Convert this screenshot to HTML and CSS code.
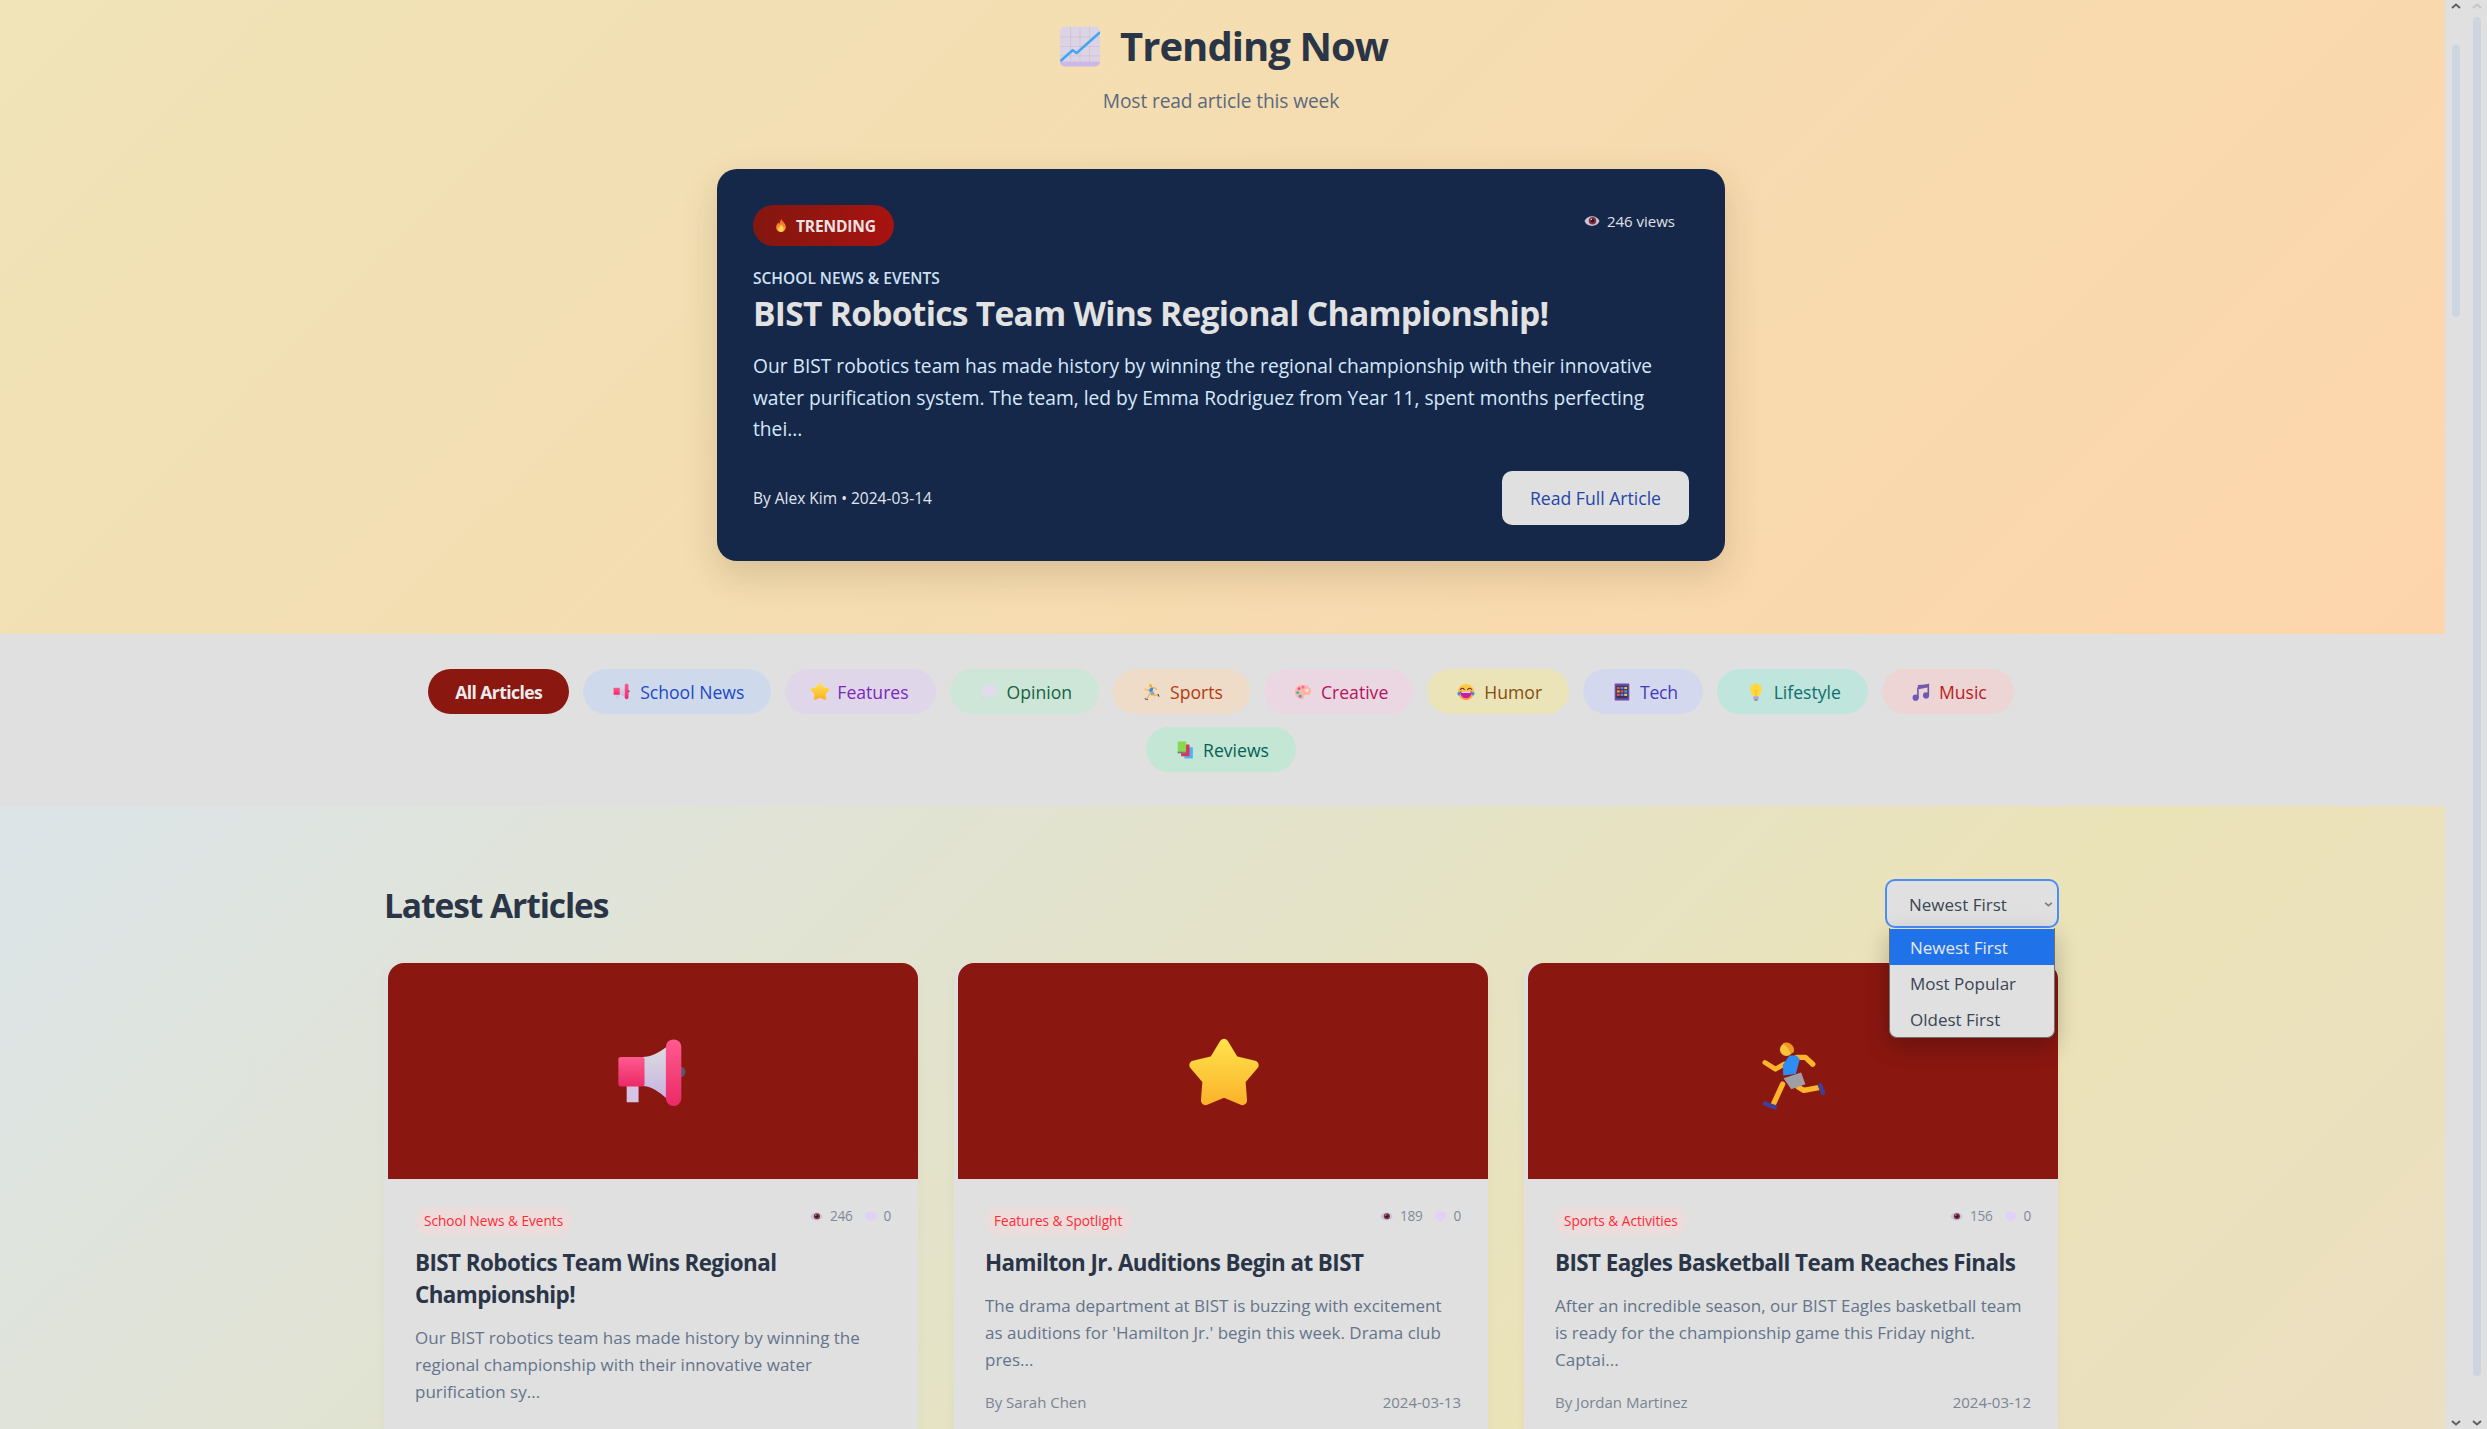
FILE: index.html
```html
<!DOCTYPE html>
<html lang="en">
<head>
<meta charset="utf-8">
<title>Trending Now</title>
<link rel="stylesheet" href="styles.css">
</head>
<body>
<svg class="defs" aria-hidden="true">
  <defs>
    <linearGradient id="gStar" x1="0" y1="0" x2="0" y2="1"><stop offset="0" stop-color="#ffe04a"/><stop offset="1" stop-color="#fbb52c"/></linearGradient>
    <linearGradient id="gPink" x1="0" y1="0" x2="0" y2="1"><stop offset="0" stop-color="#ff5a8f"/><stop offset="1" stop-color="#ec2a68"/></linearGradient>
    <linearGradient id="gCone" x1="0" y1="0" x2="0" y2="1"><stop offset="0" stop-color="#dcdce0"/><stop offset="1" stop-color="#c6b2e2"/></linearGradient>
    <linearGradient id="gFire" x1="0" y1="0" x2="0" y2="1"><stop offset="0" stop-color="#f4622a"/><stop offset="1" stop-color="#ffa63a"/></linearGradient>
    <linearGradient id="gFace" x1="0" y1="0" x2="0" y2="1"><stop offset="0" stop-color="#ffd24a"/><stop offset="1" stop-color="#fb9a3c"/></linearGradient>
    <symbol id="i-chart" viewBox="0 0 32 32">
      <rect x="0" y="0" width="32" height="32" rx="4" fill="#dcd3e4"/>
      <path d="M0 8.500H32M0 16H32M0 23.500H32M8.500 0V32M16 0V32M23.500 0V32" stroke="#cbc1d4" stroke-width=".6" fill="none"/>
      <path d="M0 28H32V28a4 4 0 0 1-4 4H4a4 4 0 0 1-4-4Z" fill="#cdb9e6"/>
      <path d="M.4 27.600 10 19l3.400 2.200L32 4.600" stroke="#3ea6f2" stroke-width="2" fill="none"/>
    </symbol>
    <symbol id="i-mega" viewBox="0 0 32 32">
      <rect x="4.500" y="19" width="5" height="8.500" rx=".5" fill="#d6c4e6"/>
      <path d="M11 8.400C15 8.400 18 6.600 21.500 4V26C18 23 15 20.600 11 20.600Z" fill="url(#gCone)"/>
      <circle cx="27" cy="14.700" r="2.300" fill="#55566e"/>
      <rect x="1" y="8.400" width="11" height="12.400" rx="1" fill="url(#gPink)"/>
      <rect x="21" y="1" width="6.500" height="28" rx="3.200" fill="url(#gPink)"/>
    </symbol>
    <symbol id="i-star" viewBox="1 2 30 30">
      <path d="M16 4.500 20.100 11.300 27.900 13.100 22.700 19.200 23.300 27.100 16 24 8.700 27.100 9.300 19.200 4.100 13.100 11.900 11.300Z" fill="url(#gStar)" stroke="url(#gStar)" stroke-width="3.600" stroke-linejoin="round"/>
    </symbol>
    <symbol id="i-run" viewBox="-1 -1 34 34">
      <g fill="none" stroke-linecap="round" stroke-linejoin="round">
        <path d="M11.600 11.100 7.700 13.400 3 10.400" stroke="#fdb52b" stroke-width="2.200"/>
        <path d="M10.900 20.100 6.900 28.800" stroke="#fdb52b" stroke-width="2.400"/>
        <path d="M18 21.500 20.400 22.900 27 21.600" stroke="#fdb52b" stroke-width="2.400"/>
        <path d="M3 28.800 7.400 30.400" stroke="#3f3f98" stroke-width="2"/>
        <path d="M27.600 20.600 29 24" stroke="#3f3f98" stroke-width="2"/>
        <path d="M17.200 8.100 21.100 8.100 24.400 11.200" stroke="#fdb52b" stroke-width="2.400"/>
      </g>
      <path d="M11.300 17.400 19.200 14.900 21.100 20.100 14.800 22.400Z" fill="#a29ea8"/>
      <path d="M14 7.300 17 7.300 18.600 9 16.800 15.600 11.200 16.200 11 11.400Z" fill="#2f8cf0"/>
      <circle cx="12.600" cy="4.600" r="2.900" fill="#fdc33c"/>
      <path d="M11 1.800a3.500 3.500 0 0 1 5 3.500c-.3 1.200-1.200 1.200-1.600.6-.5-.8-.8-2-3.400-4Z" fill="#ec9a1e"/>
    </symbol>
    <symbol id="i-fire" viewBox="0 0 32 32">
      <path d="M16.500 1C19 6 27 10.500 27 19.500C27 26 22 31 16 31C10 31 5 26.500 5 20C5 15 8 11.500 9.500 9C10.500 11 11.500 12 12.500 12C13.500 8 14.500 5 16.500 1Z" fill="url(#gFire)"/>
      <path d="M16 13C18 17 22 19.500 22 24C22 27.500 19.500 30 16 30C12.500 30 10 27.500 10 24.500C10 20.500 14.500 18 16 13Z" fill="#ffd84a"/>
    </symbol>
    <symbol id="i-eye" viewBox="0 0 32 32">
      <path d="M1 16C6 3 26 3 31 16C26 29 6 29 1 16Z" fill="#cdc2d8"/>
      <circle cx="17" cy="15.500" r="7.500" fill="#7a3540"/>
      <circle cx="17" cy="15.500" r="3.500" fill="#2e1622"/>
      <circle cx="14.500" cy="12.500" r="1.500" fill="#f0e4ea"/>
    </symbol>
    <symbol id="i-speech" viewBox="0 0 32 32">
      <path d="M16 4C8 4 2 8.500 2 14.500C2 20.500 8 24 15 24C13.500 26 11 27.500 9 28.500C14 28.500 20 26.500 23 23.500C27.500 22 30 18.500 30 14.500C30 8.500 24 4 16 4Z" fill="#dfd2f6"/>
    </symbol>
    <symbol id="i-thought" viewBox="0 0 32 32">
      <path d="M10 5C13 2 19 2 22 5C27 5 31 9 30 14C31 19 27 24 22 23.500C19 26 13 26 10.500 23.500C5 24 2 19 3 14C2 9 5 5 10 5Z" fill="#e2dbee"/>
      <circle cx="5" cy="27" r="2.400" fill="#dcd4ea"/>
      <circle cx="2" cy="31" r="1.200" fill="#dcd4ea"/>
    </symbol>
    <symbol id="i-palette" viewBox="0 0 32 32">
      <path d="M15 3C7 3 1.500 9 1.500 16C1.500 23 7 29 14 29C17 29 18.500 27 18 24.500C17.500 22 19 20.500 21.500 21C25.500 21.500 30.500 20.500 30.500 15C30.500 8 24 3 15 3Z" fill="#fdb6a0"/>
      <circle cx="9" cy="10" r="2.500" fill="#f0448c"/>
      <circle cx="16" cy="7.500" r="2.500" fill="#f466b8"/>
      <circle cx="6.500" cy="17" r="2.500" fill="#20b8d0"/>
      <circle cx="11" cy="23.500" r="2.500" fill="#3a9ae8"/>
      <circle cx="23" cy="13" r="3" fill="#e8e4ea"/>
    </symbol>
    <symbol id="i-laugh" viewBox="0 0 32 32">
      <circle cx="16" cy="16" r="14.500" fill="url(#gFace)"/>
      <path d="M6 11.500C8 8.500 11 8.500 13 11.500M19 11.500C21 8.500 24 8.500 26 11.500" stroke="#5a3a20" stroke-width="1.800" fill="none" stroke-linecap="round"/>
      <path d="M5.500 15H26.500C26.500 22 22 27 16 27C10 27 5.500 22 5.500 15Z" fill="#c81ea0"/>
      <path d="M8 15H24V17.500H8Z" fill="#f4f0f0"/>
      <path d="M1 17C3 15.500 6 15.500 7 17.500C7.500 20 5.500 22.500 3 22C1 21.500 .5 19 1 17ZM31 17C29 15.500 26 15.500 25 17.500C24.500 20 26.500 22.500 29 22C31 21.500 31.500 19 31 17Z" fill="#3f8fe8"/>
    </symbol>
    <symbol id="i-abacus" viewBox="0 0 32 32">
      <rect x="3" y="1" width="26" height="30" rx="1.500" fill="#6a4ea0"/>
      <rect x="6" y="5" width="20" height="22" fill="#3e2c60"/>
      <g fill="#f0a030">
        <rect x="7" y="7" width="5" height="4" fill="#f05040"/><rect x="13.500" y="7" width="5" height="4" fill="#3a9af0"/><rect x="20" y="7" width="5" height="4" fill="#f0c030"/>
        <rect x="7" y="13" width="5" height="4"/><rect x="13.500" y="13" width="5" height="4" fill="#f05040"/><rect x="20" y="13" width="5" height="4" fill="#3a9af0"/>
        <rect x="7" y="19" width="5" height="4" fill="#f05040"/><rect x="13.500" y="19" width="5" height="4" fill="#3a9af0"/><rect x="20" y="19" width="5" height="4" fill="#f0d040"/>
      </g>
    </symbol>
    <symbol id="i-bulb" viewBox="0 0 32 32">
      <path d="M16 1C9.500 1 5.500 6 5.500 11.500C5.500 16.500 10 18.500 11 23.500H21C22 18.500 26.500 16.500 26.500 11.500C26.500 6 22.500 1 16 1Z" fill="#ffd83e"/>
      <path d="M12.500 12 16 15 19.500 12M16 15V23" stroke="#f6a820" stroke-width="1.200" fill="none"/>
      <rect x="11" y="23.500" width="10" height="6" rx="1" fill="#b9a6c6"/>
      <rect x="13" y="29" width="6" height="2.500" rx="1" fill="#8a7a9a"/>
    </symbol>
    <symbol id="i-music" viewBox="0 0 32 32">
      <path d="M10.500 8.500 29 3V22" stroke="#7358ac" stroke-width="3" fill="none"/>
      <path d="M10.500 8V27" stroke="#7358ac" stroke-width="3" fill="none"/>
      <path d="M10 3.500 30 2V7.500L12 11Z" fill="#7358ac"/>
      <circle cx="6.500" cy="26" r="5.500" fill="#6c58b8"/>
      <circle cx="25" cy="22" r="5.500" fill="#6c58b8"/>
    </symbol>
    <symbol id="i-books" viewBox="0 0 32 32">
      <rect x="15" y="11" width="15" height="20" rx="1" fill="#4cb4f4"/>
      <rect x="9" y="6" width="15" height="21" rx="1" fill="#e0305c"/>
      <rect x="3" y="1" width="15" height="20" rx="1" fill="#88d850"/>
      <rect x="3" y="19" width="15" height="3" fill="#7a7a88"/>
    </symbol>
    <symbol id="i-chev-up" viewBox="0 0 10 6"><path d="M1 5 5 1.500 9 5" fill="none" stroke="currentColor" stroke-width="2"/></symbol>
    <symbol id="i-chev-down" viewBox="0 0 10 6"><path d="M1 1 5 4.500 9 1" fill="none" stroke="currentColor" stroke-width="2"/></symbol>
  </defs>
</svg>

<div class="app">
  <div class="page">
    <section class="hero">
      <h1 class="hero-title"><svg class="hero-title-icon"><use href="#i-chart"/></svg>Trending Now</h1>
      <p class="hero-sub">Most read article this week</p>
      <article class="feature">
        <div class="feature-top">
          <span class="badge"><svg class="badge-icon"><use href="#i-fire"/></svg>TRENDING</span>
          <span class="feature-views"><svg class="feature-eye"><use href="#i-eye"/></svg>246 views</span>
        </div>
        <div class="feature-cat">SCHOOL NEWS &amp; EVENTS</div>
        <h2 class="feature-title">BIST Robotics Team Wins Regional Championship!</h2>
        <p class="feature-text">Our BIST robotics team has made history by winning the regional championship with their innovative water purification system. The team, led by Emma Rodriguez from Year 11, spent months perfecting thei...</p>
        <div class="feature-foot">
          <span class="feature-by">By Alex Kim • 2024-03-14</span>
          <button class="read-btn">Read Full Article</button>
        </div>
      </article>
    </section>

    <nav class="filters">
      <div class="filters-row">
        <a class="pill pill-all">All Articles</a>
        <a class="pill pill-school"><svg class="pill-icon"><use href="#i-mega"/></svg>School News</a>
        <a class="pill pill-features"><svg class="pill-icon pill-icon-wide"><use href="#i-star"/></svg>Features</a>
        <a class="pill pill-opinion"><svg class="pill-icon"><use href="#i-thought"/></svg>Opinion</a>
        <a class="pill pill-sports"><svg class="pill-icon"><use href="#i-run"/></svg>Sports</a>
        <a class="pill pill-creative"><svg class="pill-icon"><use href="#i-palette"/></svg>Creative</a>
        <a class="pill pill-humor"><svg class="pill-icon"><use href="#i-laugh"/></svg>Humor</a>
        <a class="pill pill-tech"><svg class="pill-icon"><use href="#i-abacus"/></svg>Tech</a>
        <a class="pill pill-lifestyle"><svg class="pill-icon"><use href="#i-bulb"/></svg>Lifestyle</a>
        <a class="pill pill-music"><svg class="pill-icon"><use href="#i-music"/></svg>Music</a>
        <a class="pill pill-reviews"><svg class="pill-icon"><use href="#i-books"/></svg>Reviews</a>
      </div>
    </nav>

    <main class="latest">
      <div class="latest-inner">
        <header class="latest-head">
          <h2 class="latest-title">Latest Articles</h2>
          <div class="sort">
            <div class="sort-box">Newest First<svg class="sort-chev"><use href="#i-chev-down"/></svg></div>
            <ul class="sort-menu">
              <li class="sort-opt sort-opt-on">Newest First</li>
              <li class="sort-opt">Most Popular</li>
              <li class="sort-opt">Oldest First</li>
            </ul>
          </div>
        </header>
        <div class="grid">
          <article class="card">
            <div class="card-img"><svg class="card-emoji"><use href="#i-mega"/></svg></div>
            <div class="card-body">
              <div class="card-top">
                <span class="tag">School News &amp; Events</span>
                <span class="stats"><svg class="stat-icon"><use href="#i-eye"/></svg><span class="stat-num">246</span><svg class="stat-icon"><use href="#i-speech"/></svg><span>0</span></span>
              </div>
              <h3 class="card-title">BIST Robotics Team Wins Regional Championship!</h3>
              <p class="card-text">Our BIST robotics team has made history by winning the regional championship with their innovative water purification sy...</p>
              <div class="card-foot"><span>By Alex Kim</span><span>2024-03-14</span></div>
            </div>
          </article>
          <article class="card">
            <div class="card-img"><svg class="card-emoji"><use href="#i-star"/></svg></div>
            <div class="card-body">
              <div class="card-top">
                <span class="tag">Features &amp; Spotlight</span>
                <span class="stats"><svg class="stat-icon"><use href="#i-eye"/></svg><span class="stat-num">189</span><svg class="stat-icon"><use href="#i-speech"/></svg><span>0</span></span>
              </div>
              <h3 class="card-title">Hamilton Jr. Auditions Begin at BIST</h3>
              <p class="card-text">The drama department at BIST is buzzing with excitement as auditions for 'Hamilton Jr.' begin this week. Drama club pres...</p>
              <div class="card-foot"><span>By Sarah Chen</span><span>2024-03-13</span></div>
            </div>
          </article>
          <article class="card">
            <div class="card-img"><svg class="card-emoji"><use href="#i-run"/></svg></div>
            <div class="card-body">
              <div class="card-top">
                <span class="tag">Sports &amp; Activities</span>
                <span class="stats"><svg class="stat-icon"><use href="#i-eye"/></svg><span class="stat-num">156</span><svg class="stat-icon"><use href="#i-speech"/></svg><span>0</span></span>
              </div>
              <h3 class="card-title">BIST Eagles Basketball Team Reaches Finals</h3>
              <p class="card-text">After an incredible season, our BIST Eagles basketball team is ready for the championship game this Friday night. Captai...</p>
              <div class="card-foot"><span>By Jordan Martinez</span><span>2024-03-12</span></div>
            </div>
          </article>
        </div>
      </div>
    </main>
  </div>

  <aside class="gutter">
    <div class="track">
      <svg class="arrow"><use href="#i-chev-up"/></svg>
      <div class="thumb thumb-inner"></div>
      <svg class="arrow arrow-end"><use href="#i-chev-down"/></svg>
    </div>
    <div class="track">
      <svg class="arrow arrow-off"><use href="#i-chev-up"/></svg>
      <div class="thumb thumb-outer"></div>
      <svg class="arrow arrow-end"><use href="#i-chev-down"/></svg>
    </div>
  </aside>
</div>
</body>
</html>
```
FILE: styles.css
```css
* { box-sizing: border-box; }
html, body { margin: 0; height: 1429px; overflow: hidden; }
body {
  font-family: "Open Sans", "Noto Sans", "Liberation Sans", sans-serif;
  background: #e0e0e0;
  color: #1e293b;
}
.defs { position: absolute; width: 0; height: 0; }

.app { display: flex; height: 1429px; }
.page { flex: 1; min-width: 0; height: 1429px; overflow: hidden; }

/* scrollbars */
.gutter { width: 42px; flex: none; display: flex; background: #e0e0e0; }
.track { width: 22px; display: flex; flex-direction: column; align-items: center; padding: 3px 0; }
.track + .track { width: 20px; }
.arrow { width: 10px; height: 6px; color: #606060; flex: none; }
.arrow-off { color: #c4c4c4; }
.arrow-end { margin-top: auto; }
.thumb { width: 8px; border-radius: 4px; background: #ccd5e0; flex: none; }
.thumb-inner { margin-top: 36px; height: 272px; }
.thumb-outer { margin-top: 8px; height: 1359px; }

/* hero */
.hero {
  height: 634px;
  padding: 18px 3px 0 0;
  background: linear-gradient(135deg, #f0e4b8 0%, #f5dcb0 50%, #fdd5ac 100%);
  display: flex;
  flex-direction: column;
  align-items: center;
}
.hero-title {
  margin: 0;
  padding-left: 6px;
  display: flex;
  align-items: center;
  gap: 20px;
  font-size: 40px;
  line-height: 56px;
  font-weight: 700;
  letter-spacing: -.960px;
  color: #2a3547;
}
.hero-title-icon { width: 40px; height: 41px; }
.hero-sub { margin: 13px 0 0; font-size: 19.200px; line-height: 28px; letter-spacing: -.13px; color: #5b6a7e; }
.feature {
  margin-top: 54px;
  width: 1008px;
  height: 392px;
  padding: 36px;
  border-radius: 20px;
  background: #152849;
  box-shadow: 0 14px 36px rgba(90, 60, 20, .18);
  color: #e0e0e0;
}
.feature-top { display: flex; justify-content: space-between; align-items: flex-start; }
.badge {
  display: inline-flex;
  align-items: center;
  gap: 8px;
  height: 41px;
  padding: 0 18px 0 21px;
  border-radius: 21px;
  background: linear-gradient(90deg, #83170f, #a81310);
  font-size: 15.500px;
  font-weight: 700;
  letter-spacing: -.15px;
  color: #ece4e4;
}
.badge-icon { width: 14px; height: 17px; }
.feature-views { display: inline-flex; align-items: center; gap: 7px; margin: 6px 14px 0 0; font-size: 15px; line-height: 20px; color: #e0e0e8; }
.feature-eye { width: 16px; height: 16px; }
.feature-cat { margin-top: 22px; font-size: 15.500px; line-height: 20px; font-weight: 600; color: #cfe0f5; }
.feature-title { margin: 2px 0 0; font-size: 33.600px; line-height: 46px; font-weight: 700; letter-spacing: -.720px; color: #e2e2e2; }
.feature-text { margin: 14px 0 0; font-size: 19.200px; line-height: 31.600px; color: #d6e8fb; }
.feature-foot { margin-top: 26px; display: flex; justify-content: space-between; align-items: center; }
.feature-by { font-size: 15.500px; color: #e0e6f0; }
.read-btn {
  width: 187px;
  height: 54px;
  border: 0;
  border-radius: 10px;
  background: #e0e0e0;
  font: inherit;
  font-size: 17.600px;
  font-weight: 500;
  color: #2545a8;
}

/* filters */
.filters { height: 172px; padding: 35px 3px 0 0; background: #e0e0e0; }
.filters-row { width: 1680px; margin: 0 auto; display: flex; flex-wrap: wrap; justify-content: center; gap: 13px 14px; }
.pill {
  display: inline-flex;
  align-items: center;
  justify-content: center;
  gap: 9px;
  height: 45px;
  padding: 0 27px 0 30px;
  border-radius: 23px;
  font-size: 17.600px;
  font-weight: 500;
}
.pill-icon { width: 18px; height: 18px; flex: none; }
.pill-icon-wide { width: 20px; height: 20px; }
.pill-all { padding: 0 27px; background: #8a1710; color: #ececec; font-weight: 700; letter-spacing: -.6px; }
.pill-school { background: #cedaec; color: #2148c4; }
.pill-features { gap: 7px; padding-left: 25px; background: #e0d6ea; color: #7a28bc; }
.pill-opinion { background: #cde6d8; color: #166340; }
.pill-sports { background: #eedcc8; color: #b43a10; }
.pill-creative { padding-right: 25px; background: #ebd7e2; color: #b3135e; }
.pill-humor { background: #eae4b8; color: #854d0e; }
.pill-tech { padding-right: 25px; letter-spacing: -.3px; background: #d3d8ee; color: #4538c0; }
.pill-lifestyle { background: #bfe5dc; color: #0f6e6e; }
.pill-music { background: #eed5d5; color: #b91c1c; }
.pill-reviews { background: #c3e6d5; color: #065f56; }

/* latest */
.latest {
  height: 623px;
  padding: 73px 1px 0 0;
  background: linear-gradient(135deg, #dce4e8 0%, #e3e3cc 40%, #ebe3b8 70%, #ecdfc2 100%);
}
.latest-inner { width: 1676px; margin: 0 auto; }
.latest-head { display: flex; justify-content: space-between; align-items: center; height: 49px; }
.latest-title { margin: 3px 0 0; font-size: 33.600px; font-weight: 700; letter-spacing: -1.100px; color: #2a3547; }
.sort { position: relative; width: 174px; margin-right: 1px; z-index: 5; }
.sort-box {
  height: 49px;
  display: flex;
  align-items: center;
  padding: 1px 0 0 22px;
  border: 2.500px solid #4a8ef8;
  border-radius: 10px;
  background: #e0e0e0;
  font-size: 17px;
  color: #3a4556;
}
.sort-chev { position: absolute; right: 6px; top: 23px; width: 9px; height: 5px; color: #808080; }
.sort-menu {
  position: absolute;
  left: 4px;
  top: 49px;
  width: 166px;
  margin: 0;
  padding: 1px 0 0;
  list-style: none;
  background: #e0e0e0;
  border: 1px solid #6e6e6e;
  border-top: 0;
  border-radius: 0 0 8px 8px;
  box-shadow: 0 8px 24px rgba(0, 0, 0, .25);
  overflow: hidden;
}
.sort-opt { height: 36px; padding-left: 20px; font-size: 17px; line-height: 37px; color: #3a4556; }
.sort-opt-on { background: #1f72e8; color: #e8e8f8; }

.grid { margin-top: 35px; display: grid; grid-template-columns: repeat(3, 534px); gap: 36px; }
.card { background: #e0e0e0; border-radius: 16px; box-shadow: 0 4px 12px rgba(0, 0, 0, .04); }
.card-img {
  height: 216px;
  margin-left: 4px;
  padding: 7px 0 0 2px;
  border-radius: 16px 16px 0 0;
  background: #8a1710;
  display: flex;
  align-items: center;
  justify-content: center;
}
.card-emoji { width: 76px; height: 76px; }
.card-body { padding: 28px 27px 28px 31px; display: flex; flex-direction: column; }
.card-top { display: flex; justify-content: space-between; align-items: flex-start; }
.tag { height: 28px; padding: 0 9px; border-radius: 14px; background: #ecdcdc; font-size: 13.600px; line-height: 28px; color: #ff2a35; }
.stats { display: inline-flex; align-items: center; gap: 7px; margin-top: -1px; font-size: 13.600px; line-height: 20px; letter-spacing: -.3px; color: #808998; }
.stat-icon { width: 13px; height: 13px; }
.stat-num { margin-right: 4px; }
.card-title { margin: 12px 0 0; font-size: 22.400px; line-height: 32px; font-weight: 700; letter-spacing: -.560px; color: #2a3547; }
.card-text { margin: 13px 0 0; font-size: 17px; line-height: 27px; color: #64748b; }
.card-foot { margin-top: 19px; display: flex; justify-content: space-between; font-size: 15px; line-height: 20px; color: #7a8494; }
```
